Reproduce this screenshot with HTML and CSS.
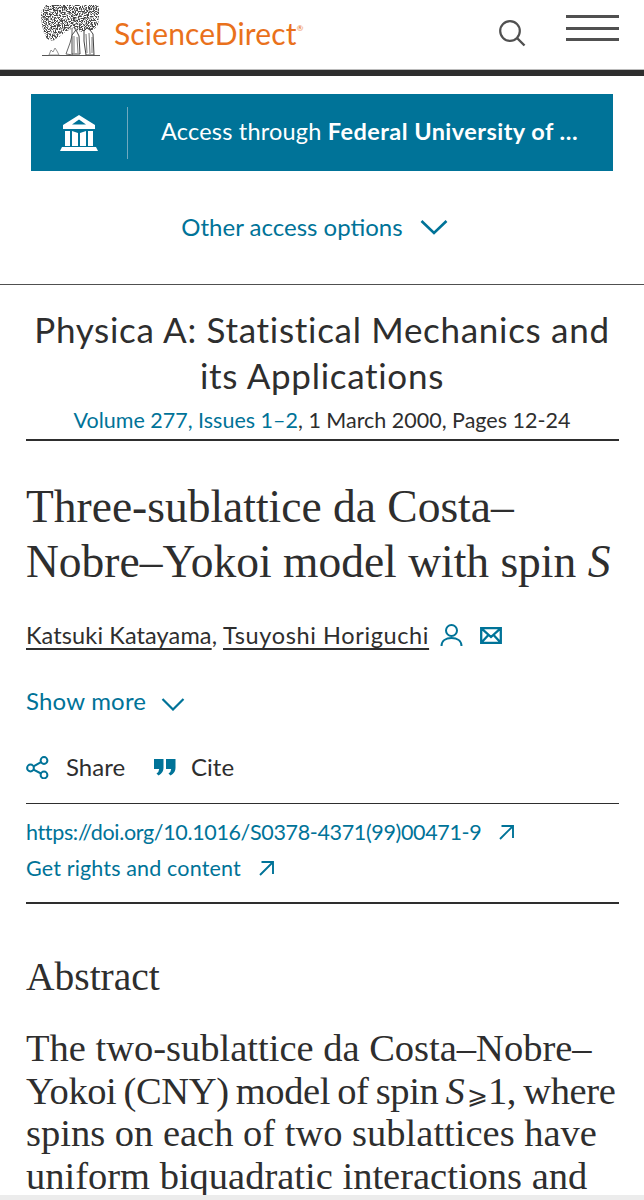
FILE: index.html
```html
<!DOCTYPE html>
<html lang="en">
<head>
<meta charset="utf-8">
<title>ScienceDirect</title>
<link rel="stylesheet" href="styles.css">
</head>
<body>
<header class="topbar">
  <div class="brand">
    <svg class="tree" viewBox="0 0 60 54" width="60" height="54" aria-hidden="true">
      <defs>
        <filter id="engrave" x="0" y="0" width="100%" height="100%">
          <feTurbulence type="fractalNoise" baseFrequency="0.8" numOctaves="2" seed="7" result="n"/>
          <feColorMatrix in="n" type="matrix" values="0 0 0 0 0  0 0 0 0 0  0 0 0 0 0  0 0 0 -7 4" result="m"/>
          <feComposite in="SourceGraphic" in2="m" operator="in"/>
        </filter>
      </defs>
      <path filter="url(#engrave)" fill="#444" d="M3 1h52q3 0 3 3v14q-2 7-10 9l-8 1-8-4-8 4-6 5-6 4-6-2-3-6-2-8-1-10q0-6 3-6z"/>
      <path d="M31 24q1 8-2 15l-4 11 7 1M34 24l1 6" fill="none" stroke="#666" stroke-width="1"/>
      <path d="M31 50V31l4-5 3 6 1 18z" fill="#fff" stroke="#444" stroke-width="1"/>
      <path d="M43 27l3-3 3 2 3 4 1 21h-8l-2-14z" fill="#fff" stroke="#444" stroke-width="1"/>
      <path d="M33 32v17M36 33l1 16M45 30l1 19M48 29l1 21M51 33v16" stroke="#555" stroke-width=".8" fill="none"/>
      <path d="M1 51.500h58" stroke="#555" stroke-width="1.100"/>
      <path d="M8 51l2-5 2 2 2-4 2 3 2 4z" fill="none" stroke="#777" stroke-width=".8"/>
    </svg>
    <span class="wordmark">ScienceDirect<sup class="reg">®</sup></span>
  </div>
  <svg class="search" viewBox="0 0 28 28" width="28" height="28" aria-hidden="true">
    <circle cx="12" cy="12" r="9.800" fill="none" stroke="#505050" stroke-width="2.200"/>
    <path d="M19 19l7.500 7.500" stroke="#505050" stroke-width="2.400"/>
  </svg>
  <div class="burger"><i></i><i></i><i></i></div>
</header>

<main>
  <section class="access">
    <a class="access-btn">
      <span class="access-icon">
        <svg viewBox="0 0 38 36" width="38" height="36" aria-hidden="true">
          <path fill="#fff" fill-rule="evenodd" d="M19 0L3 10v4h32v-4zM19 4.500l7 5H12z"/>
          <path fill="#fff" d="M5 16h5v15H5zM28 16h5v15h-5zM12 16l6 2v13h-6zM26 16l-6 2v13h6z"/>
          <path fill="#fff" d="M2 32h34l2 4H0z"/>
        </svg>
      </span>
      <span class="access-text">Access through <b>Federal University of …</b></span>
    </a>
    <div class="other">Other access options
      <svg class="chev-lg" viewBox="0 0 28 16" width="28" height="16" aria-hidden="true"><path d="M1.500 2L14 14 26.500 2" fill="none" stroke="#007398" stroke-width="2.600"/></svg>
    </div>
  </section>

  <section class="journal">
    <h2>Physica A: Statistical Mechanics and its Applications</h2>
    <p class="issue"><span class="link">Volume 277, Issues 1–2</span>, 1 March 2000, Pages 12-24</p>
  </section>

  <article class="paper">
    <h1>Three-sublattice da Costa–Nobre–Yokoi model with spin <em>S</em></h1>
    <div class="authors">
      <u class="first">Katsuki Katayama</u>, <u class="second">Tsuyoshi Horiguchi</u>
      <svg class="person" viewBox="0 0 23 24" width="23" height="24" aria-hidden="true"><circle cx="11.500" cy="7.500" r="5.500" fill="none" stroke="#007398" stroke-width="2"/><path d="M1.500 23c0-5.500 4.500-8 10-8s10 2.500 10 8" fill="none" stroke="#007398" stroke-width="2"/></svg>
      <svg class="mail" viewBox="0 0 22 17" width="22" height="17" aria-hidden="true"><path d="M1.200 1.200h19.600v14.600H1.200zM1.200 1.200L11 10l9.800-8.800M1.200 15.800l7-7.500M20.800 15.800l-7-7.500" fill="none" stroke="#007398" stroke-width="2.300"/></svg>
    </div>
    <div class="more">Show more
      <svg class="chev-sm" viewBox="0 0 24 14" width="24" height="14" aria-hidden="true"><path d="M1.500 2L12 12.500 22.500 2" fill="none" stroke="#007398" stroke-width="2.200"/></svg>
    </div>
    <div class="actions">
      <span class="action action-share">
        <svg viewBox="0 0 23 23" width="23" height="23" aria-hidden="true"><g fill="none" stroke="#007398" stroke-width="2"><circle cx="18" cy="4.500" r="3.400"/><circle cx="4.500" cy="12" r="3.400"/><circle cx="18" cy="19" r="3.400"/><path d="M7.500 10.300l7.500-4.200M7.500 13.700l7.500 3.800"/></g></svg>
        Share
      </span>
      <span class="action action-cite">
        <svg viewBox="0 0 22 18" width="22" height="18" aria-hidden="true"><path fill="#007398" d="M0 1h9.500v9q0 5-5 7.500L2.500 15.500q2.500-1.500 2.700-4.500H0zM12 1h9.500v9q0 5-5 7.500l-2-2q2.500-1.500 2.700-4.500H12z"/></svg>
        Cite
      </span>
    </div>
    <div class="links">
      <a class="ext ext-doi">https://doi.org/10.1016/S0378-4371(99)00471-9
        <svg viewBox="0 0 16 16" width="16" height="16" aria-hidden="true"><path d="M2 15L14.500 2.500M3.500 2h11.500v12" fill="none" stroke="#007398" stroke-width="1.900"/></svg>
      </a>
      <a class="ext ext-rights">Get rights and content
        <svg viewBox="0 0 16 16" width="16" height="16" aria-hidden="true"><path d="M2 15L14.500 2.500M3.500 2h11.500v12" fill="none" stroke="#007398" stroke-width="1.900"/></svg>
      </a>
    </div>
    <h3>Abstract</h3>
    <p class="body">The two-sublattice da Costa–Nobre–<span class="tight">Yokoi (CNY) model of spin <em>S</em><span class="ge">⩾</span>1, where</span> spins on each of two sublattices have uniform biquadratic interactions and</p>
  </article>
</main>
<div class="bottom-edge"></div>
</body>
</html>
```
FILE: styles.css
```css
html, body {
  margin: 0;
  padding: 0;
  height: 1200px;
  overflow: hidden;
  background: #fff;
  color: #2e2e2e;
  font-family: Lato, "Open Sans", sans-serif;
}
.topbar {
  height: 70px;
  border-bottom: 6px solid #2e2e2e;
  box-shadow: inset 0 -1px 0 #bbb;
  display: flex;
  align-items: flex-start;
  padding-left: 41px;
}
.brand {
  display: flex;
  align-items: flex-start;
  padding-top: 4px;
}
.tree { display: block; }
.wordmark {
  margin: 11px 0 0 13px;
  font-size: 30px;
  line-height: 36px;
  color: #e9711c;
  letter-spacing: 0.15px;
}
.reg { font-size: 8px; line-height: 0; vertical-align: 14px; color: #e9711c; }
.search { margin: 19px 0 0 auto; }
.burger {
  margin: 15px 25px 0 40px;
  width: 53px;
  display: flex;
  flex-direction: column;
  gap: 8.700px;
}
.burger i { display: block; height: 3px; background: #505050; }

.access {
  height: 209px;
  box-sizing: border-box;
  border-bottom: 1px solid #505050;
  padding: 18px 31px 0;
}
.access-btn {
  height: 77px;
  background: #007398;
  display: flex;
  align-items: center;
  color: #fff;
  font-size: 23.500px;
}
.access-icon {
  width: 97px;
  height: 52px;
  box-sizing: border-box;
  border-right: 1px solid #6fa9bf;
  display: flex;
  align-items: center;
  justify-content: center;
}
.access-text { margin: 0 0 3px 33px; white-space: nowrap; letter-spacing: 0.2px; }
.access-text b { font-weight: 700; letter-spacing: 0.45px; }
.other {
  margin-top: 41px;
  padding-right: 15px;
  display: flex;
  justify-content: center;
  align-items: center;
  gap: 17px;
  color: #007398;
  font-size: 24px;
  line-height: 30px;
}
.journal { padding: 21px 30px 0; text-align: center; }
.journal h2 {
  margin: 0;
  font-weight: 400;
  font-size: 35px;
  line-height: 46px;
  letter-spacing: 0.7px;
  color: #2e2e2e;
}
.issue { margin: 8px -10px 0; font-size: 21.500px; line-height: 28px; }
.link { color: #007398; }

.paper { margin: 5px 25px 0 26px; border-top: 2px solid #2e2e2e; }
.paper h1 {
  margin: 38px 0 0;
  font-family: "Liberation Serif", serif;
  font-weight: 400;
  font-size: 45.500px;
  line-height: 55px;
  color: #2e2e2e;
}
.authors {
  margin-top: 31px;
  display: flex;
  align-items: center;
  font-size: 23.500px;
  line-height: 30px;
  white-space: pre;
}
.authors u { text-underline-offset: 4px; text-decoration-thickness: 1.500px; }
.authors .first { letter-spacing: 0.12px; }
.authors .second { letter-spacing: 0.62px; }
.person { margin-left: 11px; }
.mail { margin-left: 17px; }
.more {
  margin-top: 36px;
  display: flex;
  align-items: center;
  gap: 15px;
  color: #007398;
  font-size: 24px;
  line-height: 30px;
  letter-spacing: 0.2px;
}
.chev-sm { margin-top: 6px; }
.actions {
  margin-top: 36px;
  display: flex;
  gap: 29px;
  font-size: 24px;
  line-height: 30px;
  padding-bottom: 21px;
  border-bottom: 1px solid #2e2e2e;
}
.action { display: flex; align-items: center; }
.action-share { gap: 17px; }
.action-cite { gap: 15px; }
.links {
  padding: 13px 0 19px;
  border-bottom: 2px solid #2e2e2e;
  display: flex;
  flex-direction: column;
  gap: 6px;
}
.ext {
  display: flex;
  align-items: center;
  gap: 17px;
  color: #007398;
  font-size: 21.500px;
  line-height: 30px;
}
.ext-doi { letter-spacing: -0.35px; }
.ext-rights { letter-spacing: 0.15px; }
.paper h3 {
  margin: 48px 0 0;
  font-family: "Liberation Serif", serif;
  font-weight: 400;
  font-size: 39.500px;
  line-height: 50px;
}
.body {
  margin: 25px -14px 0 0;
  font-family: "Liberation Serif", serif;
  font-size: 38.500px;
  line-height: 42.500px;
}
.tight { letter-spacing: -0.4px; word-spacing: -2px; white-space: nowrap; }
.ge { font-size: 0.65em; line-height: 0; margin-left: 3px; }
.bottom-edge {
  position: fixed;
  left: 0;
  right: 0;
  bottom: 0;
  height: 5px;
  background: #ececec;
}
```
